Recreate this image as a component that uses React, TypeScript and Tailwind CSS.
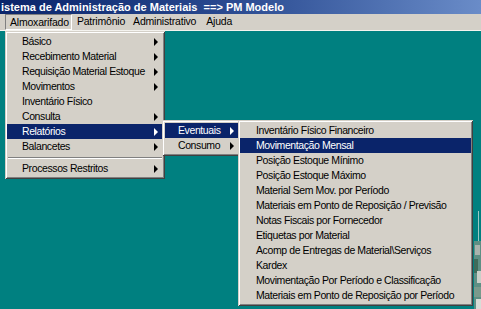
import React from "react";

// Classic Win2000 menu look: 3D border via stacked inset shadows.
const MENU_BOX =
  "absolute bg-[#d4d0c8] shadow-[inset_1px_1px_0_#d4d0c8,inset_-1px_-1px_0_#404040,inset_2px_2px_0_#ffffff,inset_-2px_-2px_0_#808080]";

const FONT = { fontFamily: '"Liberation Sans", Arial, sans-serif' };

const Arrow = ({ white }: { white?: boolean }) => (
  <span
    className={`block w-0 h-0 border-y-[4px] border-y-transparent border-l-[4px] ${
      white ? "border-l-white" : "border-l-black"
    }`}
  />
);

interface ItemProps {
  label: string;
  sub?: boolean;
  active?: boolean;
  pl: string;
  pr: string;
}

const Item = ({ label, sub, active, pl, pr }: ItemProps) => (
  <div
    className={`flex items-center justify-between h-[15px] leading-[15px] text-[10.5px] tracking-[-0.4px] whitespace-nowrap ${pl} ${pr} ${
      active ? "bg-[#0a246a] text-white" : "text-black"
    }`}
  >
    <span>{label}</span>
    {sub && <Arrow white={active} />}
  </div>
);

const MAIN = [
  { label: "Básico", sub: true },
  { label: "Recebimento Material", sub: true },
  { label: "Requisição Material Estoque", sub: true },
  { label: "Movimentos", sub: true },
  { label: "Inventário Físico" },
  { label: "Consulta", sub: true },
  { label: "Relatórios", sub: true, active: true },
  { label: "Balancetes", sub: true },
];

const REPORTS = [
  "Inventário Físico Financeiro",
  "Movimentação Mensal",
  "Posição Estoque Mínimo",
  "Posição Estoque Máximo",
  "Material Sem Mov. por Período",
  "Materiais em Ponto de Reposição / Previsão",
  "Notas Fiscais por Fornecedor",
  "Etiquetas por Material",
  "Acomp de Entregas de Material\\Serviços",
  "Kardex",
  "Movimentação Por Período e Classificação",
  "Materiais em Ponto de Reposição por Período",
];

export default function App() {
  return (
    <div className="w-[481px] h-[309px] flex flex-col overflow-hidden bg-[#008080]" style={FONT}>
      {/* title bar */}
      <div className="h-[14px] flex items-center pl-[1px] bg-gradient-to-r from-[#0a246a] via-[#2c4c92] to-[#6a8cc8]">
        <span className="text-white font-bold text-[11px] leading-[14px] whitespace-pre">
          istema de Administração de Materiais  ==&gt; PM Modelo
        </span>
      </div>

      {/* menu bar */}
      <div className="h-[17px] flex items-center bg-[#d4d0c8] border-b border-b-[#f4f3ef] text-[10.5px] tracking-[-0.2px] text-black">
        <div className="ml-[5px] h-[16px] leading-[14px] pl-[4px] pr-[2px] border border-t-[#808080] border-l-[#808080] border-b-white border-r-white">
          Almoxarifado
        </div>
        <div className="ml-[5px]">Patrimônio</div>
        <div className="ml-[8px]">Administrativo</div>
        <div className="ml-[10px]">Ajuda</div>
      </div>

      {/* desktop */}
      <div className="relative flex-1">
        <div className={`${MENU_BOX} left-[5px] top-0 w-[160px] px-[2px] py-[3px]`}>
          {MAIN.map((m) => (
            <Item key={m.label} label={m.label} sub={m.sub} active={m.active} pl="pl-[15px]" pr="pr-[5px]" />
          ))}
          <div className="h-[7px] flex flex-col justify-center px-[1px]">
            <div className="h-px bg-[#808080]" />
            <div className="h-px bg-white" />
          </div>
          <Item label="Processos Restritos" sub pl="pl-[15px]" pr="pr-[5px]" />
        </div>

        <div className={`${MENU_BOX} left-[162px] top-[89px] w-[79px] px-[3px] py-[3px]`}>
          <Item label="Eventuais" sub active pl="pl-[13px]" pr="pr-[4px]" />
          <Item label="Consumo" sub pl="pl-[13px]" pr="pr-[4px]" />
        </div>

        <div className={`${MENU_BOX} left-[238px] top-[89px] w-[235px] px-[2px] py-[3px]`}>
          {REPORTS.map((r, i) => (
            <Item key={r} label={r} active={i === 1} pl="pl-[16px]" pr="pr-[4px]" />
          ))}
        </div>

        {/* edge of a desktop picture at the right */}
        <div className="absolute right-0 top-[210px] w-[7px] h-[68px]">
          <svg width="7" height="68" viewBox="0 0 7 68">
            <rect x="0" y="0" width="7" height="68" fill="#5e8f84" />
            <rect x="1" y="4" width="5" height="10" fill="#a9b3ad" />
            <rect x="0" y="18" width="4" height="14" fill="#3f6b5a" />
            <rect x="3" y="30" width="4" height="12" fill="#c9cfc8" />
            <rect x="0" y="46" width="7" height="10" fill="#7a9a8c" />
            <rect x="2" y="58" width="5" height="10" fill="#d8dcd6" />
          </svg>
        </div>
        <div className="absolute right-[2px] top-[180px] h-[30px] w-px bg-[#9cc7c4]" />
      </div>
    </div>
  );
}
